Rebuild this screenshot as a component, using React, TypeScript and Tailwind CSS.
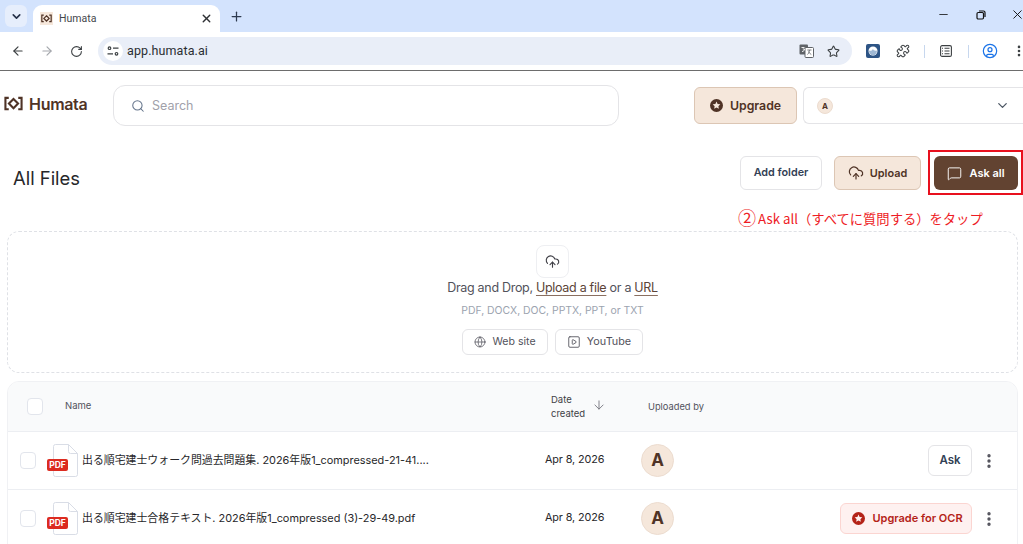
import React from "react";
import { ChevronDown, X, Plus, ArrowLeft, ArrowRight, RotateCw, Star, Minus, Search, ArrowDown, CloudUpload, MessageSquare, Globe, SquarePlay, EllipsisVertical, Puzzle, CircleUser } from "lucide-react";

const font = "font-['Inter','Noto_Sans_CJK_JP',sans-serif]";

function Logo({ size = 20, color = "#4f3326" }: { size?: number; color?: string }) {
  return (
    <svg width={size} height={size * 0.8} viewBox="0 0 20 16" fill="none" stroke={color} strokeWidth="2.200">
      <path d="M5 2H1.500v12H5" />
      <path d="M15 2h3.500v12H15" />
      <path d="M10 3.200 14.800 8 10 12.800 5.200 8Z" />
    </svg>
  );
}

function StarBadge({ size, color, inner }: { size: number; color: string; inner: string }) {
  return (
    <svg width={size} height={size} viewBox="0 0 16 16">
      <circle cx="8" cy="8" r="8" fill={color} />
      <path d="M8 3.200 9.400 6.200 12.700 6.600 10.300 8.800 10.900 12 8 10.400 5.100 12 5.700 8.800 3.300 6.600 6.600 6.200Z" fill={inner} />
    </svg>
  );
}

function PdfIcon() {
  return (
    <div className="relative w-[31px] h-[33px] shrink-0">
      <svg width="26" height="33" viewBox="0 0 26 33" className="absolute left-[5px] top-0" fill="#fff" stroke="#d9dde6" strokeWidth="1">
        <path d="M1.500 2.500a2 2 0 0 1 2-2h13l9 9v21a2 2 0 0 1-2 2h-20a2 2 0 0 1-2-2Z" />
        <path d="M16.500 .5v7a2 2 0 0 0 2 2h7" fill="none" />
      </svg>
      <div className="absolute left-0 top-[15px] w-[21px] h-[12px] bg-[#dc2b20] rounded-[2px] text-white text-[8.500px] leading-[12px] font-bold text-center">PDF</div>
    </div>
  );
}

function Avatar() {
  return (
    <div className="w-[33px] h-[33px] rounded-full bg-[#f5e7db] border border-[#ecdccf] flex items-center justify-center text-[17px] font-bold text-[#4f3326]">A</div>
  );
}

function Checkbox() {
  return <div className="w-[16px] h-[17px] rounded-[4px] border border-[#e2e5ec] bg-white shrink-0" />;
}

function Row({ name, action }: { name: string; action: React.ReactNode }) {
  return (
    <div className="flex items-center h-[58px] border-t border-[#eceef2] pl-[12px] pr-[19px]">
      <Checkbox />
      <div className="ml-[11px]"><PdfIcon /></div>
      <div className="ml-[4px] w-[463px] text-[10.900px] text-[#27272a] whitespace-nowrap overflow-hidden">{name}</div>
      <div className="text-[10.800px] tracking-[-0.1px] text-[#27272a] w-[96px]">Apr 8, 2026</div>
      <Avatar />
      <div className="flex-1 flex justify-end items-center">{action}</div>
      <EllipsisVertical size={18} className="ml-[8px] text-[#52525b]" strokeWidth={2.500} />
    </div>
  );
}

export default function App() {
  return (
    <div className={`${font} h-[544px] w-[1023px] overflow-hidden bg-white flex flex-col`}>
      {/* tab strip */}
      <div className="h-[32px] bg-[#d3e3fd] flex items-end shrink-0 pl-[5px]">
        <div className="w-[22px] h-[22px] mb-[5px] rounded-[6px] bg-[#e6eefc] flex items-center justify-center">
          <ChevronDown size={13} strokeWidth={3} className="text-[#26324a]" />
        </div>
        <div className="ml-[6px] w-[187px] h-[27px] bg-white rounded-t-[9px] flex items-center pl-[7px] pr-[7px]">
          <div className="w-[13px] h-[13px] bg-[#f5e7db] flex items-center justify-center"><Logo size={11} /></div>
          <span className="ml-[6px] text-[10.500px] text-[#44474c] font-['Roboto','Liberation_Sans',sans-serif]">Humata</span>
          <X size={13} strokeWidth={2.500} className="ml-auto text-[#2d2f33]" />
        </div>
        <Plus size={15} strokeWidth={2} className="ml-[9px] mb-[8px] text-[#2d3a4f]" />
        <div className="ml-auto flex items-center mb-[10px]">
          <Minus size={13} strokeWidth={1.500} className="text-[#111]" />
          <svg width="10" height="10" viewBox="0 0 10 10" fill="none" stroke="#111" strokeWidth="1.200" className="ml-[26px]">
            <rect x="1" y="2.500" width="6.500" height="6.500" rx="1.200" />
            <path d="M3 1h4.500A1.500 1.500 0 0 1 9 2.500V7" />
          </svg>
          <X size={15} strokeWidth={1.500} className="ml-[24px] mr-[-2px] text-[#111]" />
        </div>
      </div>
      {/* toolbar */}
      <div className="h-[39px] shrink-0 bg-white border-b border-[#6d6d6d] flex items-center pl-[11px] overflow-hidden font-['Roboto','Liberation_Sans',sans-serif] [&>*]:shrink-0">
        <ArrowLeft size={14} strokeWidth={2} className="text-[#3c4043]" />
        <ArrowRight size={14} strokeWidth={2} className="ml-[15px] text-[#a5a8ad]" />
        <RotateCw size={13} strokeWidth={2} className="ml-[16px] text-[#3c4043]" />
        <div className="ml-[15px] w-[754px] h-[28px] rounded-full bg-[#e9eef8] flex items-center pl-[5px] pr-[12px]">
          <div className="w-[20px] h-[20px] rounded-full bg-white flex items-center justify-center">
            <svg width="12" height="10" viewBox="0 0 12 10" fill="none" stroke="#3c4043" strokeWidth="1.200">
              <circle cx="2.500" cy="2.200" r="1.300" /><path d="M6 2.200h5.500M.5 7.800H6" /><circle cx="9.500" cy="7.800" r="1.300" />
            </svg>
          </div>
          <span className="ml-[4px] text-[12.500px] text-[#2b2e33] tracking-[0.1px]">app.humata.ai</span>
          <svg width="15" height="14" viewBox="0 0 15 14" className="ml-auto">
            <rect x="0.500" y="0.500" width="8.500" height="10" rx="1" fill="#5f6368" />
            <rect x="6" y="3.500" width="8.500" height="10" rx="1" fill="#fff" stroke="#5f6368" />
            <path d="M8.300 6h4.200M10.400 6c0 2.500-1 3.800-2 4.500M9.500 7.500c.6 1.300 1.400 2.300 2.800 3" stroke="#5f6368" fill="none" strokeWidth=".8" />
            <path d="M2.500 3.500h3M3 7.500c1.500 0 2.500-1 2.500-2.500H3.800" stroke="#fff" fill="none" strokeWidth=".9" />
          </svg>
          <Star size={13} strokeWidth={2} className="ml-[13px] text-[#3c4043]" />
        </div>
        <div className="ml-[14px] w-[14px] h-[14px] rounded-[2px] bg-[#2d5485] flex items-center justify-center">
          <svg width="10" height="10" viewBox="0 0 10 10"><circle cx="5" cy="5" r="4.500" fill="#fff" /><path d="M1 4.500c2 1 3.500-.5 4-1.500.5 1.500 2 2 4 1.500C9 7.500 7.300 9.500 5 9.500S1 7 1 4.500Z" fill="#9fb8d4" /></svg>
        </div>
        <Puzzle size={14} strokeWidth={1.800} className="ml-[16px] text-[#3c4043]" />
        <div className="ml-[14px] w-px h-[13px] bg-[#c7d7ee]" />
        <svg width="12" height="12" viewBox="0 0 12 12" fill="none" stroke="#3c4043" strokeWidth="1.100" className="ml-[15px]">
          <rect x=".6" y=".6" width="10.800" height="10.800" rx="1.500" /><path d="M4.500 3.200h5M4.500 6h5M4.500 8.800h5M2 3.200h1M2 6h1M2 8.800h1" />
        </svg>
        <div className="ml-[16px] w-px h-[13px] bg-[#c7d7ee]" />
        <CircleUser size={16} strokeWidth={1.800} className="ml-[13px] text-[#1a73e8]" />
        <EllipsisVertical size={14} strokeWidth={2.500} className="ml-[14px] text-[#3c4043]" />
      </div>
      {/* app header */}
      <div className="flex items-center shrink-0 h-[55px] mt-[7px] pl-[4px]">
        <div className="flex items-center mt-[-3px]">
          <Logo size={19} />
          <span className="ml-[6px] w-[58px] text-[16px] font-semibold tracking-[-0.3px] text-[#4f3326]">Humata</span>
        </div>
        <div className="ml-[26px] w-[506px] h-[41px] rounded-[12px] border border-[#e4e4e7] flex items-center pl-[17px]">
          <Search size={14} strokeWidth={1.800} className="text-[#64748b]" />
          <span className="ml-[7px] mt-[1px] text-[12.500px] text-[#a1a1aa]">Search</span>
        </div>
        <div className="ml-[75px] w-[103px] h-[37px] rounded-[6px] bg-[#f5e7db] border border-[#dcc6b4] flex items-center justify-center gap-[7px]">
          <StarBadge size={13} color="#4f3326" inner="#f5e7db" />
          <span className="mt-[1px] text-[12.300px] font-semibold text-[#4f3326]">Upgrade</span>
        </div>
        <div className="ml-[6px] flex-1 h-[37px] rounded-l-[6px] border border-r-0 border-[#e4e4e7] flex items-center pl-[13px] pr-[13px]">
          <div className="w-[16px] h-[16px] rounded-full bg-[#f5e7db] border border-[#ecdccf] flex items-center justify-center text-[8px] font-bold text-[#4f3326]">A</div>
          <ChevronDown size={15} strokeWidth={2} className="ml-auto text-[#4b5563]" />
        </div>
      </div>
      {/* title row */}
      <div className="flex items-center shrink-0 h-[34px] mt-[23px] pl-[13px] pr-[5px]">
        <h1 className="mt-[12px] text-[18.400px] font-normal text-[#27272a]">All Files</h1>
        <div className="ml-auto flex items-center">
          <div className="w-[82px] h-[34px] rounded-[6px] border border-[#e4e4e7] flex items-center justify-center text-[10.800px] font-semibold text-[#334155]">Add folder</div>
          <div className="ml-[12px] w-[87px] h-[34px] rounded-[6px] bg-[#f5e7db] border border-[#dcc6b4] flex items-center justify-center gap-[6px] text-[10.900px] font-semibold text-[#4f3326]">
            <CloudUpload size={16} strokeWidth={1.800} />Upload
          </div>
          <div className="relative ml-[13px] w-[84px] h-[34px] rounded-[6px] bg-[#624331] flex items-center justify-center gap-[7px] text-[11px] font-semibold text-white">
            <MessageSquare size={15} strokeWidth={1.500} />Ask all
            <div className="absolute left-[-6px] top-[-6px] w-[95px] h-[45px] border-2 border-[#e8101e]" />
          </div>
        </div>
      </div>
      {/* annotation */}
      <div className="shrink-0 h-[20px] mt-[17px] pl-[738px] text-[13.300px] leading-[20px] text-[#ee1c25] whitespace-nowrap font-['Noto_Sans_CJK_JP',sans-serif]">
        <span className="mr-[2px] text-[18px] leading-[20px] align-[-1px]">②</span>Ask all（すべてに質問する）をタップ
      </div>
      {/* dropzone */}
      <div className="shrink-0 ml-[7px] mr-[5px] mt-[4px] h-[142px] rounded-[12px] border border-dashed border-[#dfe1e6] flex flex-col items-center pt-[13px] pl-[80px]">
        <div className="w-[33px] h-[33px] rounded-[8px] border border-[#eeeff2] flex items-center justify-center">
          <CloudUpload size={15} strokeWidth={1.800} className="text-[#3f3f46]" />
        </div>
        <div className="text-[12.500px] tracking-[-0.3px] leading-[20px] text-[#52525b]">
          Drag and Drop, <span className="text-[#5c4438] underline decoration-[#8a6f60] underline-offset-[3px]">Upload a file</span> or a <span className="text-[#5c4438] underline decoration-[#8a6f60] underline-offset-[3px]">URL</span>
        </div>
        <div className="mt-[5px] text-[10.400px] leading-[16px] text-[#9ca3af]">PDF, DOCX, DOC, PPTX, PPT, or TXT</div>
        <div className="mt-[10px] flex gap-[7px]">
          <div className="w-[86px] h-[26px] rounded-[6px] border border-[#e4e4e7] flex items-center justify-center gap-[6px] text-[10.600px] text-[#52525b]">
            <Globe size={12} strokeWidth={1.500} />Web site
          </div>
          <div className="w-[88px] h-[26px] rounded-[6px] border border-[#e4e4e7] flex items-center justify-center gap-[6px] text-[10.800px] text-[#52525b]">
            <SquarePlay size={14} strokeWidth={1.500} />YouTube
          </div>
        </div>
      </div>
      {/* table */}
      <div className="shrink-0 ml-[7px] mr-[5px] mt-[8px] rounded-t-[12px] border border-[#f0f1f4] overflow-hidden">
        <div className="h-[49px] bg-[#f9fafb] flex items-center pl-[19px] text-[9.500px] text-[#52525b]">
          <Checkbox />
          <span className="ml-[22px] w-[486px]">Name</span>
          <span className="w-[36px] leading-[14px] text-[#3f3f46]">Date created</span>
          <ArrowDown size={14} strokeWidth={1.500} className="ml-[5px] text-[#71717a] mt-[-4px]" />
          <span className="ml-[42px] text-[9.300px]">Uploaded by</span>
        </div>
        <Row
          name="出る順宅建士ウォーク問過去問題集. 2026年版1_compressed-21-41...."
          action={<div className="w-[44px] h-[31px] rounded-[6px] border border-[#e4e4e7] flex items-center justify-center text-[11.500px] font-semibold text-[#334155]">Ask</div>}
        />
        <Row
          name="出る順宅建士合格テキスト. 2026年版1_compressed (3)-29-49.pdf"
          action={
            <div className="w-[132px] h-[31px] rounded-[6px] bg-[#fef1f0] border border-[#fbd5d1] flex items-center justify-center gap-[7px] pl-[3px] text-[11px] font-semibold text-[#b42318]">
              <StarBadge size={13} color="#b42318" inner="#fef1f0" />Upgrade for OCR
            </div>
          }
        />
      </div>
    </div>
  );
}
